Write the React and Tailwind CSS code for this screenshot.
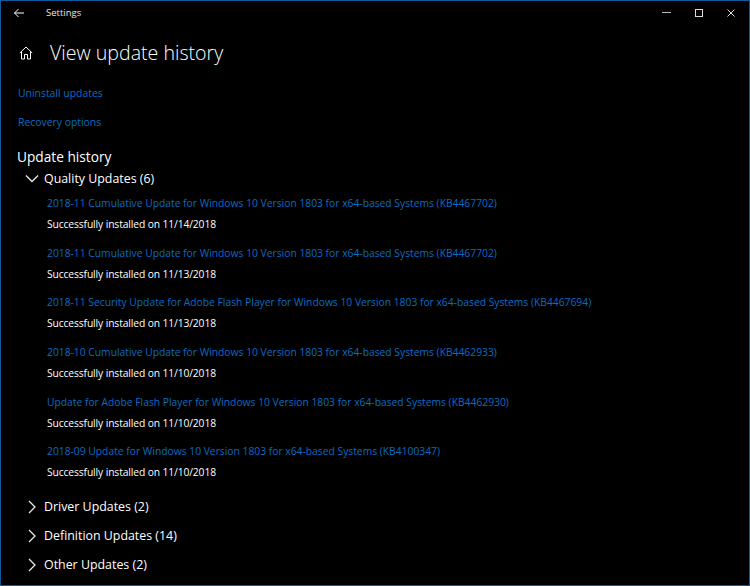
const updates = [
  ["2018-11 Cumulative Update for Windows 10 Version 1803 for x64-based Systems (KB4467702)", "Successfully installed on 11/14/2018"],
  ["2018-11 Cumulative Update for Windows 10 Version 1803 for x64-based Systems (KB4467702)", "Successfully installed on 11/13/2018"],
  ["2018-11 Security Update for Adobe Flash Player for Windows 10 Version 1803 for x64-based Systems (KB4467694)", "Successfully installed on 11/13/2018"],
  ["2018-10 Cumulative Update for Windows 10 Version 1803 for x64-based Systems (KB4462933)", "Successfully installed on 11/10/2018"],
  ["Update for Adobe Flash Player for Windows 10 Version 1803 for x64-based Systems (KB4462930)", "Successfully installed on 11/10/2018"],
  ["2018-09 Update for Windows 10 Version 1803 for x64-based Systems (KB4100347)", "Successfully installed on 11/10/2018"],
];

const collapsed = ["Driver Updates (2)", "Definition Updates (14)", "Other Updates (2)"];

function Chevron({ open }) {
  return (
    <svg width="16" height="16" viewBox="0 0 16 16" fill="none" stroke="#eee" strokeWidth="1.25" className="shrink-0">
      {open ? <path d="M2 4.5 8 10.5l6-6" /> : <path d="M5 2l6 6-6 6" />}
    </svg>
  );
}

export default function App() {
  return (
    <div className="w-[750px] h-[586px] bg-black text-white border border-[#0f5a9c] overflow-hidden font-['Open_Sans',sans-serif]">
      {/* title bar */}
      <div className="flex items-center h-[23px] pl-[12px] pr-[13px]">
        <svg width="12" height="12" viewBox="0 0 12 12" fill="none" stroke="#fff" strokeWidth="1">
          <path d="M11 6H1.5M5.5 2 1.5 6l4 4" />
        </svg>
        <span className="ml-[21px] pt-[1px] text-[9.5px] text-[#e6e6e6]">Settings</span>
        <div className="ml-auto flex items-center gap-[24px] pr-[1px]">
          <div className="w-[9px] h-px bg-[#bbb]" />
          <div className="w-[8px] h-[8px] border border-[#ddd]" />
          <svg width="8" height="8" viewBox="0 0 8 8" stroke="#ddd" strokeWidth="1"><path d="M.5.5l7 7M7.5.5l-7 7" /></svg>
        </div>
      </div>

      {/* page heading */}
      <div className="flex items-center mt-[14px] pl-[18px] h-[30px]">
        <svg width="14" height="14" viewBox="0 0 14 14" fill="none" stroke="#fff" strokeWidth="1">
          <path d="M.8 7 7 1l6.2 6M2.5 5.6V13h3V8.5h3V13h3V5.6" />
        </svg>
        <h1 className="ml-[17px] text-[19.6px] font-light leading-none">View update history</h1>
      </div>

      <div className="pl-[17px] mt-[17px] flex flex-col gap-[13px] text-[10.4px] text-[#0a6cc4] leading-[16px]">
        <a>Uninstall updates</a>
        <a>Recovery options</a>
      </div>

      <h2 className="pl-[16px] mt-[17px] text-[13.7px] leading-[20px]">Update history</h2>

      <div className="flex items-center h-[20px] pl-[23px] gap-[4px] mt-[2px] text-[12.4px]">
        <Chevron open />
        <span>Quality Updates (6)</span>
      </div>

      <div className="pl-[46px] mt-[4px] flex flex-col gap-[8.7px] text-[10.3px] leading-[20px]">
        {updates.map(([title, status], i) => (
          <div key={i}>
            <div className="text-[#0a6cc4] whitespace-nowrap leading-[21px]">{title}</div>
            <div className="tracking-[-0.12px]">{status}</div>
          </div>
        ))}
      </div>

      <div className="mt-[15px] flex flex-col gap-[9px] pl-[23px] text-[12.4px]">
        {collapsed.map((name) => (
          <div key={name} className="flex items-center h-[20px] gap-[4px]">
            <Chevron />
            <span>{name}</span>
          </div>
        ))}
      </div>
    </div>
  );
}
